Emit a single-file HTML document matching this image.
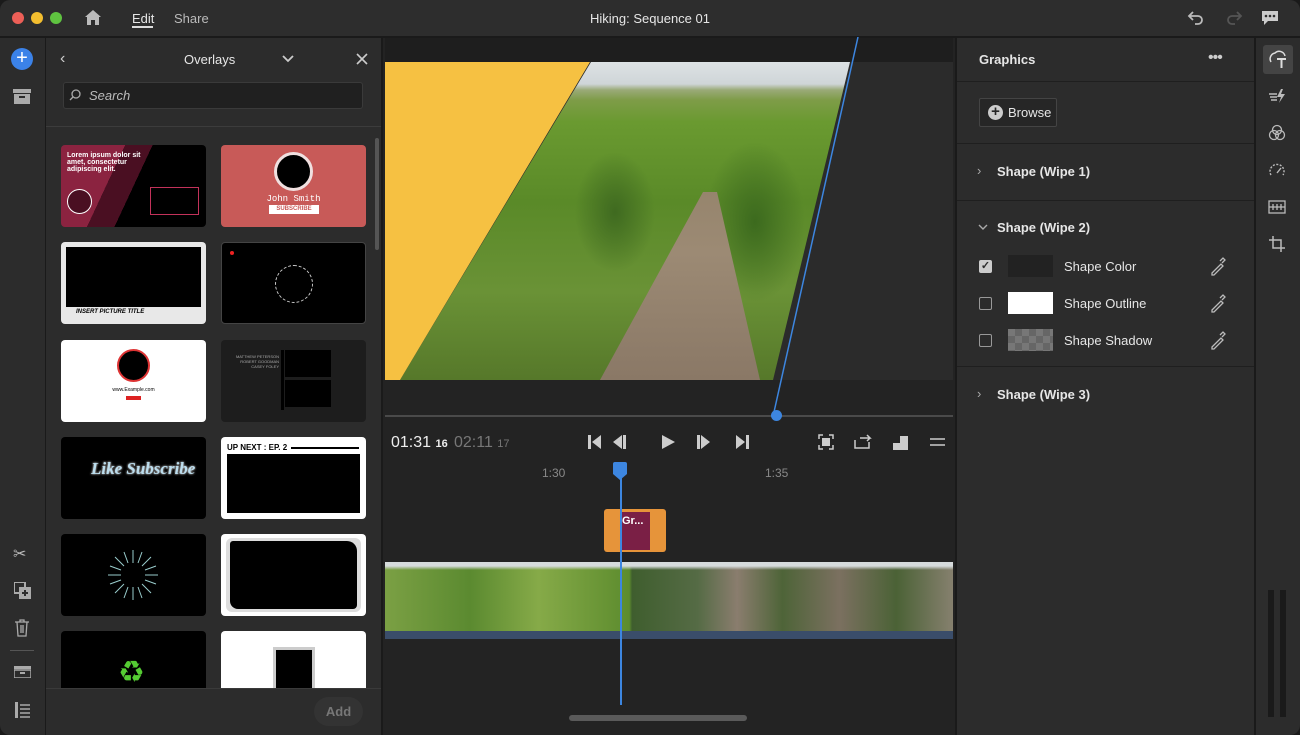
<!DOCTYPE html>
<html><head><style>
*{box-sizing:border-box;margin:0;padding:0}
body{width:1300px;height:735px;background:#1a1a1a;font-family:"Liberation Sans",sans-serif;color:#ddd;position:relative;overflow:hidden}
.a{position:absolute}
.t{font-size:13px;color:#e6e6e6}
.th{position:absolute;width:145px;height:82px;border-radius:4px;overflow:hidden;background:#000}
.ic{position:absolute;color:#bbb;font-size:16px}
</style></head><body>
<div class="a" style="left:0;top:0;width:1300px;height:37px;background:#2d2d2d;border-radius:10px 10px 0 0;border-bottom:1px solid #1a1a1a"></div>
<div class="a" style="left:12px;top:12px;width:12px;height:12px;border-radius:50%;background:#ec5f57"></div>
<div class="a" style="left:31px;top:12px;width:12px;height:12px;border-radius:50%;background:#f3be2f"></div>
<div class="a" style="left:50px;top:12px;width:12px;height:12px;border-radius:50%;background:#5fc340"></div>
<svg class="a" style="left:84px;top:9px" width="18" height="17" viewBox="0 0 18 17"><path d="M9 1L1 8h2v8h4v-5h4v5h4V8h2z" fill="#bbb"/></svg>
<div class="a t" style="left:132px;top:11px">Edit</div>
<div class="a" style="left:132px;top:26px;width:21px;height:2px;background:#ddd"></div>
<div class="a t" style="left:174px;top:11px;color:#bbb">Share</div>
<div class="a t" style="left:0;width:1300px;text-align:center;top:11px">Hiking: Sequence 01</div>
<svg class="a" style="left:1187px;top:9px" width="18" height="16"><path d="M6 3L2 7l4 4M2 7h9a4 4 0 010 8H8" stroke="#bbb" stroke-width="1.8" fill="none"/></svg>
<svg class="a" style="left:1225px;top:9px" width="18" height="16"><path d="M12 3l4 4-4 4M16 7H7a4 4 0 000 8h3" stroke="#555" stroke-width="1.8" fill="none"/></svg>
<svg class="a" style="left:1261px;top:10px" width="18" height="16"><path d="M1 1h16v10H7l-4 4v-4H1z" fill="#ccc"/><circle cx="5" cy="6" r="1.3" fill="#2d2d2d"/><circle cx="9" cy="6" r="1.3" fill="#2d2d2d"/><circle cx="13" cy="6" r="1.3" fill="#2d2d2d"/></svg>
<div class="a" style="left:0;top:38px;width:45px;height:697px;background:#2c2c2c;border-radius:0 0 0 10px"></div>
<div class="a" style="left:11px;top:48px;width:22px;height:22px;border-radius:50%;background:#3b82e8;color:#fff;font-size:20px;line-height:21px;text-align:center">+</div>
<svg class="a" style="left:13px;top:89px" width="18" height="15"><rect x="0" y="0" width="18" height="4" fill="#aaa"/><rect x="1" y="5" width="16" height="10" fill="#aaa"/><rect x="6" y="7" width="6" height="2" fill="#2c2c2c"/></svg>
<div class="ic" style="left:13px;top:544px">✂</div>
<svg class="a" style="left:14px;top:582px" width="17" height="17"><rect x="0" y="0" width="11" height="11" fill="none" stroke="#aaa" stroke-width="2"/><rect x="5" y="5" width="12" height="12" fill="#aaa"/><path d="M11 8v6M8 11h6" stroke="#2c2c2c" stroke-width="2"/></svg>
<svg class="a" style="left:14px;top:619px" width="16" height="18"><path d="M1 3h14M6 3V1h4v2M3 3l1 14h8l1-14M7 6v8M9 6v8" stroke="#aaa" stroke-width="1.3" fill="none"/></svg>
<div class="a" style="left:10px;top:650px;width:24px;height:1px;background:#555"></div>
<svg class="a" style="left:14px;top:666px" width="17" height="12"><rect x="0" y="0" width="17" height="3" fill="#aaa"/><rect x="0" y="4" width="17" height="8" fill="none" stroke="#aaa" stroke-width="1.5"/><rect x="6" y="6" width="5" height="2" fill="#aaa"/></svg>
<svg class="a" style="left:15px;top:702px" width="15" height="16"><rect x="0" y="0" width="3" height="16" fill="#aaa"/><path d="M5 3h10M5 7h10M5 11h10M5 15h10" stroke="#aaa" stroke-width="1.6"/></svg>
<div class="a" style="left:46px;top:38px;width:335px;height:697px;background:#2c2c2c"></div>
<div class="a" style="left:46px;top:126px;width:335px;height:1px;background:#3c3c3c"></div>
<div class="a t" style="left:60px;top:50px;font-size:16px;color:#ccc">‹</div>
<div class="a t" style="left:184px;top:52px">Overlays</div>
<svg class="a" style="left:282px;top:55px" width="12" height="8"><path d="M1 1l5 5 5-5" stroke="#ccc" stroke-width="1.8" fill="none"/></svg>
<svg class="a" style="left:356px;top:53px" width="12" height="12"><path d="M1 1l10 10M11 1L1 11" stroke="#ccc" stroke-width="1.6"/></svg>
<div class="a" style="left:63px;top:82px;width:300px;height:27px;background:#202020;border:1px solid #3a3a3a;border-radius:3px"></div>
<svg class="a" style="left:69px;top:89px" width="12" height="12"><circle cx="7" cy="5" r="4" stroke="#aaa" stroke-width="1.3" fill="none"/><path d="M4 8L1 11" stroke="#aaa" stroke-width="1.3"/></svg>
<div class="a t" style="left:89px;top:88px;font-style:italic;color:#bbb">Search</div>
<div class="a" style="left:375px;top:138px;width:4px;height:112px;background:#555;border-radius:2px"></div>
<div class="a" style="left:46px;top:128px;width:329px;height:560px;overflow:hidden">
 <div class="th" style="left:15px;top:17px;background:linear-gradient(115deg,#8b2340 0 35%,#4a0f22 35% 50%,#000 50%)"><div class="a" style="left:6px;top:7px;font-size:7px;font-weight:bold;color:#fff;width:80px">Lorem ipsum dolor sit amet, consectetur adipiscing elit.</div><div class="a" style="left:6px;top:44px;width:25px;height:25px;border-radius:50%;border:1px solid #fff;background:#4a0f22"></div><div class="a" style="left:89px;top:42px;width:49px;height:28px;border:1px solid #c2325a"></div></div>
 <div class="th" style="left:175px;top:17px;background:#c85a58"><div class="a" style="left:53px;top:7px;width:39px;height:39px;border-radius:50%;background:#000;border:3px solid #f0e0e0"></div><div class="a" style="left:0;width:145px;text-align:center;top:49px;font-size:9px;color:#fff;font-family:'Liberation Mono',monospace">John Smith</div><div class="a" style="left:48px;top:60px;width:50px;height:9px;background:#fff;font-size:6px;color:#c85a58;text-align:center;line-height:9px;font-weight:bold">SUBSCRIBE</div></div>
 <div class="th" style="left:15px;top:114px;background:#e8e8e8"><div class="a" style="left:5px;top:5px;width:135px;height:60px;background:#000"></div><div class="a" style="left:15px;top:67px;font-size:6px;color:#000;font-weight:bold;font-style:italic">INSERT PICTURE TITLE</div></div>
 <div class="th" style="left:175px;top:114px;border:1px solid #444"><div class="a" style="left:8px;top:8px;width:4px;height:4px;border-radius:50%;background:#e22"></div><div class="a" style="left:53px;top:22px;width:38px;height:38px;border-radius:50%;border:1px dashed #ccc"></div></div>
 <div class="th" style="left:15px;top:212px;background:#fff"><div class="a" style="left:56px;top:9px;width:33px;height:33px;border-radius:50%;background:#000;border:2px solid #d33"></div><div class="a" style="left:0;width:145px;text-align:center;top:47px;font-size:5px;color:#000">www.Example.com</div><div class="a" style="left:65px;top:56px;width:15px;height:4px;background:#d22"></div></div>
 <div class="th" style="left:175px;top:212px;background:#1d1d1d"><div class="a" style="left:60px;top:10px;width:3px;height:60px;background:#000"></div><div class="a" style="left:64px;top:10px;width:46px;height:27px;background:#000"></div><div class="a" style="left:64px;top:40px;width:46px;height:27px;background:#000"></div><div class="a" style="left:10px;top:14px;font-size:4px;color:#aaa;width:48px;text-align:right">MATTHEW PETERSON<br>ROBERT GOODMAN<br>CASEY FOLEY</div></div>
 <div class="th" style="left:15px;top:309px"><div class="a" style="left:30px;top:22px;font-size:17px;color:#bde;font-style:italic;font-weight:bold;font-family:'Liberation Serif',serif;text-shadow:0 0 2px #fff">Like Subscribe</div></div>
 <div class="th" style="left:175px;top:309px;background:#fff"><div class="a" style="left:6px;top:6px;font-size:8px;font-weight:bold;color:#000">UP NEXT : EP. 2</div><div class="a" style="left:70px;top:10px;width:68px;height:2px;background:#000"></div><div class="a" style="left:6px;top:17px;width:133px;height:59px;background:#000"></div></div>
 <div class="th" style="left:15px;top:406px"><svg class="a" style="left:46px;top:15px" width="52" height="52" viewBox="-26 -26 52 52"><g stroke="#9cc" stroke-width="1"><path d="M0-25V-12M0 25V12M-25 0H-12M25 0H12M-18-18l9 9M18 18l-9-9M18-18l-9 9M-18 18l9-9M-9-23l4 11M9 23l-4-11M23-9l-11 4M-23 9l11-4M9-23l-4 11M-9 23l4-11M23 9l-11-4M-23-9l11 4"/></g></svg></div>
 <div class="th" style="left:175px;top:406px;background:#fff"><div class="a" style="left:5px;top:4px;width:135px;height:74px;background:#ddd;border-radius:6px"></div><div class="a" style="left:9px;top:7px;width:127px;height:68px;background:#000;border-radius:3px 10px 4px 8px"></div></div>
 <div class="th" style="left:15px;top:503px"><div class="a" style="left:57px;top:24px;font-size:30px;color:#5c3">♻</div></div>
 <div class="th" style="left:175px;top:503px;background:#fff"><div class="a" style="left:52px;top:16px;width:42px;height:45px;background:#000;border:3px solid #ccc"></div></div>
</div>
<div class="a" style="left:46px;top:688px;width:335px;height:1px;background:#3a3a3a"></div>
<div class="a" style="left:314px;top:697px;width:49px;height:29px;border-radius:15px;background:#333;color:#777;font-size:13px;text-align:center;line-height:29px;font-weight:bold">Add</div>
<div class="a" style="left:383px;top:38px;width:572px;height:697px;background:#232323"></div>
<div class="a" style="left:385px;top:38px;width:568px;height:24px;background:#1e1e1e"></div>
<div class="a" style="left:385px;top:62px;width:568px;height:318px;background:#2b2b2b"></div>
<div class="a" style="left:385px;top:62px;width:568px;height:318px;clip-path:polygon(206px 0,465px 0,388px 318px,15px 318px);background:
radial-gradient(ellipse 40px 60px at 230px 150px,#3f6a20 0,transparent 100%),
radial-gradient(ellipse 50px 80px at 370px 160px,#3c6a1e 0,transparent 100%),
linear-gradient(180deg,#dde2e4 0,#cfd5d8 22px,#9aaa78 28px,#7e9c48 38px,#6a9a30 60px,#5a8a28 140px,#6a9236 230px,#56782a 318px)"></div>
<div class="a" style="left:385px;top:62px;width:568px;height:318px;clip-path:polygon(318px 130px,332px 130px,375px 318px,215px 318px);background:linear-gradient(180deg,#8a7a5e,#9c8a74 60%,#8a7866)"></div>
<div class="a" style="left:385px;top:62px;width:206px;height:318px;background:#f6c142;clip-path:polygon(0 0,205px 0,15px 318px,0 318px)"></div>
<svg class="a" style="left:383px;top:37px" width="572" height="385"><path d="M475 0L391 375" stroke="#3d86e0" stroke-width="1.5"/></svg>
<div class="a" style="left:385px;top:415px;width:568px;height:2px;background:#4a4a4a"></div>
<div class="a" style="left:771px;top:410px;width:11px;height:11px;border-radius:50%;background:#3d86e0"></div>
<div class="a" style="left:391px;top:434px;font-size:16px;color:#eee">01:31 <span style="font-size:11px;font-weight:bold">16</span></div>
<div class="a" style="left:454px;top:434px;font-size:16px;color:#777">02:11 <span style="font-size:11px">17</span></div>
<svg class="a" style="left:586px;top:434px" width="166" height="16"><g fill="#ccc"><rect x="2" y="1" width="3" height="14"/><path d="M15 1L6 8l9 7z"/><rect x="37" y="1" width="3" height="14"/><path d="M36 1l-9 7 9 7z"/><path d="M76 1l13 7-13 7z"/><rect x="111" y="1" width="3" height="14"/><path d="M115 1l9 7-9 7z"/><path d="M150 1l9 7-9 7z"/><rect x="160" y="1" width="3" height="14"/></g></svg>
<svg class="a" style="left:818px;top:434px" width="130" height="16"><g fill="none" stroke="#ccc" stroke-width="1.5"><path d="M1 5V1h4M11 1h4v4M15 11v4h-4M5 15H1v-4"/><path d="M37 6v8h14V8"/><path d="M42 4h10l-3-3M52 4l-3 3"/><path d="M112 5h15M112 11h15"/></g><rect x="4" y="4" width="8" height="8" fill="#ccc"/><path d="M75 9h7V2h8v14H75z" fill="#ccc"/></svg>
<div class="a" style="left:542px;top:466px;font-size:12px;color:#888">1:30</div>
<div class="a" style="left:765px;top:466px;font-size:12px;color:#888">1:35</div>
<div class="a" style="left:604px;top:509px;width:62px;height:43px;background:#e6943a;border-radius:3px"></div>
<div class="a" style="left:621px;top:512px;width:29px;height:38px;background:#7a1f45"></div>
<div class="a" style="left:622px;top:515px;font-size:11px;font-weight:bold;color:#fff">Gr...</div>
<div class="a" style="left:385px;top:562px;width:568px;height:69px;background:
linear-gradient(180deg,#d6dbdc 0,#d6dbdc 4px,transparent 8px),
linear-gradient(90deg,#7ba044 0,#5b8a30 15%,#86aa48 27%,#5d8c2e 43%,#3f5e2e 43.5%,#556b45 55%,#8a7d6e 62%,#4e6438 70%,#7b7060 80%,#4b6236 90%,#86806e 100%)"></div>
<div class="a" style="left:385px;top:631px;width:568px;height:8px;background:#3a4d6a"></div>
<div class="a" style="left:613px;top:462px;width:14px;height:12px;background:#3d86e0;border-radius:2px 2px 0 0"></div>
<div class="a" style="left:613px;top:474px;width:0;height:0;border-left:7px solid transparent;border-right:7px solid transparent;border-top:6px solid #3d86e0"></div>
<div class="a" style="left:620px;top:478px;width:1.5px;height:227px;background:#3d86e0"></div>
<div class="a" style="left:569px;top:715px;width:178px;height:6px;border-radius:3px;background:#5a5a5a"></div>
<div class="a" style="left:957px;top:38px;width:297px;height:697px;background:#2c2c2c"></div>
<div class="a t" style="left:979px;top:52px;font-weight:bold">Graphics</div>
<div class="a" style="left:1208px;top:49px;font-size:16px;color:#ccc;letter-spacing:-1px">•••</div>
<div class="a" style="left:957px;top:81px;width:297px;height:1px;background:#1f1f1f"></div>
<div class="a" style="left:979px;top:98px;width:78px;height:29px;border:1px solid #444;background:#262626;border-radius:2px"></div>
<div class="a" style="left:988px;top:105px;width:15px;height:15px;border-radius:50%;background:#ccc;color:#262626;font-weight:bold;font-size:15px;line-height:14px;text-align:center">+</div>
<div class="a t" style="left:1008px;top:105px">Browse</div>
<div class="a" style="left:957px;top:143px;width:297px;height:1px;background:#1f1f1f"></div>
<div class="a t" style="left:977px;top:163px;color:#aaa">›</div>
<div class="a t" style="left:997px;top:164px;font-weight:bold">Shape (Wipe 1)</div>
<div class="a" style="left:957px;top:200px;width:297px;height:1px;background:#1f1f1f"></div>
<svg class="a" style="left:978px;top:224px" width="10" height="7"><path d="M1 1l4 4 4-4" stroke="#aaa" stroke-width="1.4" fill="none"/></svg>
<div class="a t" style="left:997px;top:220px;font-weight:bold">Shape (Wipe 2)</div>
<div class="a" style="left:979px;top:260px;width:13px;height:13px;background:#ccc;border-radius:2px;color:#2c2c2c;font-size:11px;line-height:13px;text-align:center;font-weight:bold">✓</div>
<div class="a" style="left:1008px;top:255px;width:45px;height:22px;background:#222"></div>
<div class="a t" style="left:1064px;top:259px">Shape Color</div>
<div class="a" style="left:979px;top:297px;width:13px;height:13px;border:1.5px solid #999;border-radius:2px"></div>
<div class="a" style="left:1008px;top:292px;width:45px;height:22px;background:#fff"></div>
<div class="a t" style="left:1064px;top:296px">Shape Outline</div>
<div class="a" style="left:979px;top:334px;width:13px;height:13px;border:1.5px solid #999;border-radius:2px"></div>
<div class="a" style="left:1008px;top:329px;width:45px;height:22px;background:repeating-conic-gradient(#666 0 25%,#777 0 50%) 0 0/14px 14px"></div>
<div class="a t" style="left:1064px;top:333px">Shape Shadow</div>
<svg class="a" style="left:1210px;top:257px" width="16" height="100"><g stroke="#bbb" stroke-width="1.3" fill="none"><path d="M2 16l9-9 2 2-9 9H2zM10 4l3-3 2 2-3 3"/><path d="M2 53l9-9 2 2-9 9H2zM10 41l3-3 2 2-3 3"/><path d="M2 90l9-9 2 2-9 9H2zM10 78l3-3 2 2-3 3"/></g></svg>
<div class="a" style="left:957px;top:366px;width:297px;height:1px;background:#1f1f1f"></div>
<div class="a t" style="left:977px;top:386px;color:#aaa">›</div>
<div class="a t" style="left:997px;top:387px;font-weight:bold">Shape (Wipe 3)</div>
<div class="a" style="left:1256px;top:38px;width:44px;height:697px;background:#2c2c2c;border-radius:0 0 10px 0"></div>
<div class="a" style="left:1263px;top:45px;width:30px;height:29px;background:#444;border-radius:3px"></div>
<svg class="a" style="left:1268px;top:50px" width="20" height="19"><path d="M3 12a6 6 0 014-9 6 6 0 0110 3" stroke="#ddd" stroke-width="1.5" fill="none"/><path d="M9 9h9M13.5 9v9" stroke="#ddd" stroke-width="2"/></svg>
<svg class="a" style="left:1268px;top:88px" width="18" height="16"><path d="M1 6h8M2 9h7M3 12h6" stroke="#bbb" stroke-width="1.5"/><path d="M13 1l-4 8h4l-2 6 6-9h-4l2-5z" fill="#bbb"/></svg>
<svg class="a" style="left:1268px;top:124px" width="18" height="18" fill="none" stroke="#bbb" stroke-width="1.3"><circle cx="9" cy="6" r="4.5"/><circle cx="6" cy="11" r="4.5"/><circle cx="12" cy="11" r="4.5"/></svg>
<svg class="a" style="left:1268px;top:162px" width="18" height="14" fill="none" stroke="#bbb" stroke-width="1.4"><path d="M3 13A7 7 0 1115 13" stroke-dasharray="2 1.5"/><path d="M9 11l4-5"/></svg>
<svg class="a" style="left:1268px;top:200px" width="18" height="14" fill="none" stroke="#bbb" stroke-width="1.3"><rect x="1" y="1" width="16" height="12"/><path d="M1 7h16M5 4v6M9 4v6M13 4v6"/></svg>
<svg class="a" style="left:1268px;top:235px" width="18" height="18" fill="none" stroke="#bbb" stroke-width="1.5"><path d="M5 1v12h12M1 5h12v12"/></svg>
<div class="a" style="left:1268px;top:590px;width:6px;height:127px;background:#1a1a1a"></div>
<div class="a" style="left:1280px;top:590px;width:6px;height:127px;background:#1a1a1a"></div>
</body></html>
